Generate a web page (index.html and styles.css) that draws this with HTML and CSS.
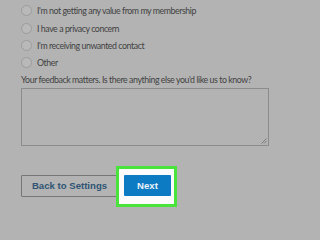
FILE: index.html
```html
<!DOCTYPE html>
<html>
<head>
<meta charset="utf-8">
<link rel="stylesheet" href="styles.css">
</head>
<body>
<div class="page">
  <ul class="options">
    <li class="option"><span class="radio"></span><span class="opt-text">I'm not getting any value from my membership</span></li>
    <li class="option"><span class="radio"></span><span class="opt-text">I have a privacy concern</span></li>
    <li class="option"><span class="radio"></span><span class="opt-text">I'm receiving unwanted contact</span></li>
    <li class="option"><span class="radio"></span><span class="opt-text">Other</span></li>
  </ul>
  <label class="feedback-label">Your feedback matters. Is there anything else you'd like us to know?</label>
  <div class="textarea">
    <svg class="grip" width="7" height="7" viewBox="0 0 7 7"><path d="M6.5 1.5 L1.5 6.5 M6.5 4 L4 6.5" stroke="#777" stroke-width="0.9" fill="none"/></svg>
  </div>
  <div class="actions">
    <button class="btn-back">Back to Settings</button>
    <span class="highlight"><button class="btn-next">Next</button></span>
  </div>
</div>
</body>
</html>
```
FILE: styles.css
```css
html, body {
  margin: 0;
  padding: 0;
  background: #b3b3b3;
}
.page {
  width: 300px;
  height: 225px;
  padding: 2px 0 0 21px;
  box-sizing: border-box;
  display: flex;
  flex-direction: column;
  font-family: Lato, "Open Sans", sans-serif;
  color: #424242;
  overflow: hidden;
}
.options {
  list-style: none;
  margin: 0;
  padding: 0;
  display: flex;
  flex-direction: column;
}
.option {
  height: 17.4px;
  display: flex;
  align-items: center;
  gap: 5px;
  font-size: 8.8px;
  letter-spacing: -0.44px;
}
.radio {
  width: 9px;
  height: 9px;
  border: 1px solid #9c9c9c;
  border-radius: 50%;
  background: #b9b9b9;
  flex: none;
}
.feedback-label {
  margin-top: 2.5px;
  font-size: 8.8px;
  letter-spacing: -0.43px;
  line-height: 12px;
  white-space: nowrap;
}
.textarea {
  margin-top: 1.5px;
  width: 248px;
  height: 58px;
  box-sizing: border-box;
  border: 1px solid #8c8c8c;
  position: relative;
}
.grip {
  position: absolute;
  right: 1px;
  bottom: 1px;
}
.actions {
  margin-top: 29px;
  display: flex;
  align-items: center;
  gap: 6px;
}
.btn-back {
  width: 97px;
  height: 22px;
  box-sizing: border-box;
  background: #b3b3b3;
  border: 1px solid #767676;
  color: #2f5474;
  font-family: "Liberation Sans", Arial, sans-serif;
  font-weight: bold;
  font-size: 9.6px;
  padding: 0;
  border-radius: 1px;
}
.highlight {
  position: relative;
  z-index: 0;
  display: flex;
}
.highlight::before {
  content: "";
  position: absolute;
  left: -8px;
  right: -6px;
  top: -9px;
  bottom: -11px;
  background: #fbfbfb;
  border: 3px solid #48e43c;
  z-index: 0;
}
.btn-next {
  position: relative;
  z-index: 1;
  width: 47px;
  height: 21px;
  border: none;
  background: #0d7bc3;
  color: #eaf2fa;
  font-family: "Liberation Sans", Arial, sans-serif;
  font-weight: bold;
  font-size: 9.6px;
  padding: 0;
  border-radius: 1px;
}
```
